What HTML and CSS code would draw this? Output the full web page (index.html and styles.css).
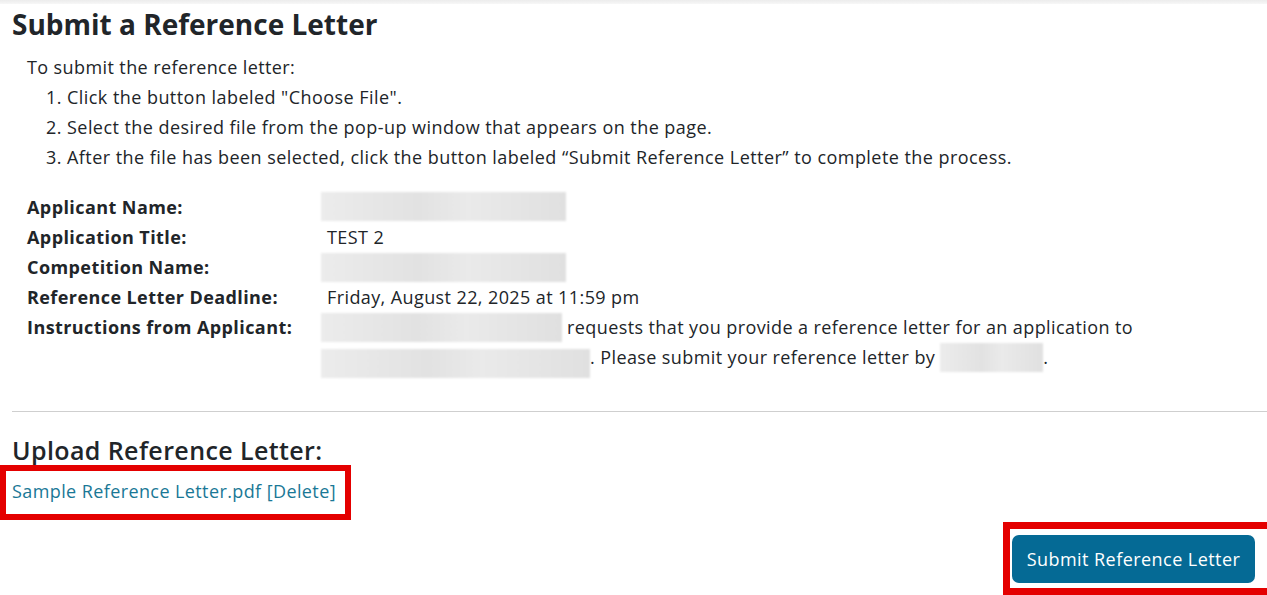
FILE: index.html
```html
<!DOCTYPE html>
<html>
<head>
<meta charset="utf-8">
<link rel="stylesheet" href="styles.css">
</head>
<body>
<div class="topbar"></div>
<main class="page">
  <h1 class="title">Submit a Reference Letter</h1>
  <div class="intro">
    <p class="lead">To submit the reference letter:</p>
    <ol class="steps">
      <li>Click the button labeled "Choose File".</li>
      <li>Select the desired file from the pop-up window that appears on the page.</li>
      <li>After the file has been selected, click the button labeled “Submit Reference Letter” to complete the process.</li>
    </ol>
  </div>
  <div class="details">
    <div class="label">Applicant Name:</div>
    <div class="value"><span class="redact w245 r0"></span></div>
    <div class="label">Application Title:</div>
    <div class="value text">TEST 2</div>
    <div class="label">Competition Name:</div>
    <div class="value"><span class="redact w245 r1"></span></div>
    <div class="label">Reference Letter Deadline:</div>
    <div class="value text">Friday, August 22, 2025 at 11:59 pm</div>
    <div class="label">Instructions from Applicant:</div>
    <div class="value instr"><span class="redact w241 r1"></span> requests that you provide a reference letter for an application to <span class="redact w269 r2"></span>. Please submit your reference letter by <span class="redact w103 r3"></span>.</div>
  </div>
  <hr class="divider">
  <h2 class="subtitle">Upload Reference Letter:</h2>
  <div class="file-box"><a class="file-link" href="#">Sample Reference Letter.pdf [Delete]</a></div>
  <div class="actions">
    <div class="btn-box"><button class="btn-submit">Submit Reference Letter</button></div>
  </div>
</main>
</body>
</html>
```
FILE: styles.css
```css
* { box-sizing: border-box; }
html, body { margin: 0; padding: 0; background: #fff; }
body {
  font-family: "Open Sans", "Noto Sans", sans-serif;
  font-size: 18px;
  letter-spacing: 0.4px;
  color: #212529;
  overflow: hidden;
}
.topbar {
  height: 4px;
  background: linear-gradient(#ececec, #f7f7f7);
}
.title {
  margin: 1px 0 0 12px;
  font-size: 28px;
  letter-spacing: 0;
  font-weight: 700;
  line-height: 38px;
}
.intro { margin: 9px 0 0 27px; }
.lead { margin: 0; line-height: 30px; }
.steps {
  margin: 0;
  padding-left: 40px;
  line-height: 30px;
  letter-spacing: 0.45px;
}
.details {
  display: grid;
  grid-template-columns: 294px 820px;
  grid-auto-rows: 30px;
  margin: 20px 0 0 27px;
  line-height: 30px;
}
.label { font-weight: 700; letter-spacing: 0.42px; }
.value.text { padding-left: 6px; }
.instr { grid-row: span 2; }
.redact {
  display: inline-block;
  height: 29px;
  background: linear-gradient(90deg, #ececec, #e2e2e2 40%, #eaeaea 60%, #e0e0e0);
  filter: blur(1px);
}
.r0 { vertical-align: -6px; }
.r1 { vertical-align: -8px; }
.r2 { vertical-align: -14px; }
.r3 { vertical-align: -8px; }
.w245 { width: 245px; }
.w241 { width: 241px; }
.w269 { width: 269px; }
.w103 { width: 103px; }
.divider {
  margin: 39px 0 0 12px;
  border: 0;
  border-top: 1px solid #cfcfcf;
}
.subtitle {
  margin: 22px 0 0 12px;
  font-size: 25px;
  letter-spacing: 0.4px;
  font-weight: 600;
  line-height: 32px;
}
.file-box {
  display: inline-block;
  margin-top: -1px;
  border: 6px solid #e40000;
  padding: 8px 9px 11px 6px;
}
.file-link {
  color: #1a7896;
  text-decoration: none;
  line-height: 22px;
}
.actions {
  display: flex;
  justify-content: flex-end;
  margin-top: 2px;
}
.btn-box {
  border: 7px solid #e40000;
  border-right: 0;
  padding: 6px 12px 5px 2px;
}
.btn-submit {
  font-family: inherit;
  font-size: 18px;
  letter-spacing: 0.45px;
  color: #fff;
  background: #056a95;
  border: 0;
  border-radius: 7px;
  padding: 0 12px;
  height: 48px;
  width: 243px;
}
```
